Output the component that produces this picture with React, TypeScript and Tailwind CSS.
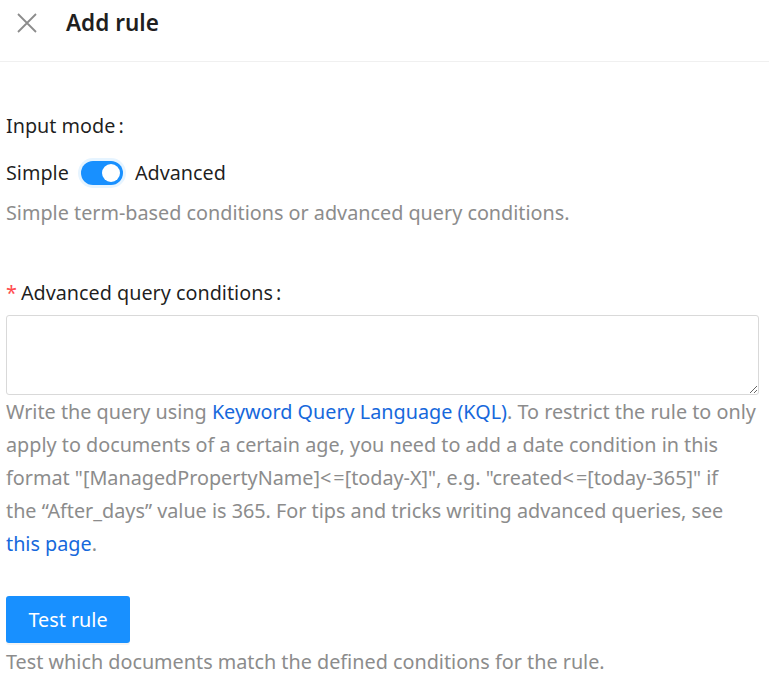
import { useState } from 'react'

const Le = () => <span>&lt;<span className="ml-[2px]">=</span></span>

export default function App() {
  const [advanced, setAdvanced] = useState(true)

  return (
    <div className="min-h-screen bg-white text-[19.8px] text-[rgba(0,0,0,0.88)] [font-family:'Noto_Sans',sans-serif]">
      {/* header */}
      <div className="flex items-center h-[62px] border-b border-[#f0f0f0] pl-[17px] pb-[16px]">
        <button className="text-[#8c8c8c] shrink-0">
          <svg width="20" height="20" viewBox="0 0 20 20" fill="none" stroke="currentColor" strokeWidth="1.8">
            <path d="M1 1 L19 19 M19 1 L1 19" />
          </svg>
        </button>
        <span className="ml-[29px] text-[22.5px] font-semibold text-[#1f1f1f]">Add rule</span>
      </div>

      <div className="px-[6px] pt-[47px]">
        {/* input mode */}
        <div className="leading-[33px]">Input mode<span className="ml-[3px]">:</span></div>
        <div className="flex items-center gap-[12px] mt-[14px] leading-[33px]">
          <span>Simple</span>
          <button
            onClick={() => setAdvanced(!advanced)}
            className={`relative w-[42px] h-[24px] rounded-full shadow-[0_0_0_3px_#e6f4ff] ${advanced ? 'bg-[#1890ff]' : 'bg-[#bfbfbf]'}`}>
            <span className={`absolute top-[3px] w-[18px] h-[18px] rounded-full bg-white ${advanced ? 'left-[21px]' : 'left-[3px]'}`} />
          </button>
          <span>Advanced</span>
        </div>
        <p className="text-[#8c8c8c] leading-[33px] mt-[7px]">Simple term-based conditions or advanced query conditions.</p>

        {/* query */}
        <div className="mt-[47px] leading-[33px]">
          <span className="text-[#ff4d4f] mr-[4px]">*</span>Advanced query conditions<span className="ml-[3px]">:</span>
        </div>
        <textarea className="block w-[753px] h-[80px] mt-[6px] border border-[#d9d9d9] rounded-[3px] outline-none px-3 py-1" />
        <p className="text-[#8c8c8c] leading-[33px] pr-[4px]">
          Write the query using <a className="text-[#1668dc]">Keyword Query Language (KQL)</a>. To restrict the rule to only apply to documents of a certain age, you need to add a date condition in this format "[ManagedPropertyName]<Le />[today-X]", e.g. "created<Le />[today-365]" if<br />the “After_days” value is 365. For tips and tricks writing advanced queries, see <a className="text-[#1668dc]">this page</a>.
        </p>

        <button className="mt-[36px] h-[47px] w-[124px] rounded-[3px] bg-[#1890ff] text-white shadow-[0_2px_0_rgba(0,0,0,0.045)]">Test rule</button>
        <p className="text-[#8c8c8c] leading-[33px] mt-[2px]">Test which documents match the defined conditions for the rule.</p>
      </div>
    </div>
  )
}
